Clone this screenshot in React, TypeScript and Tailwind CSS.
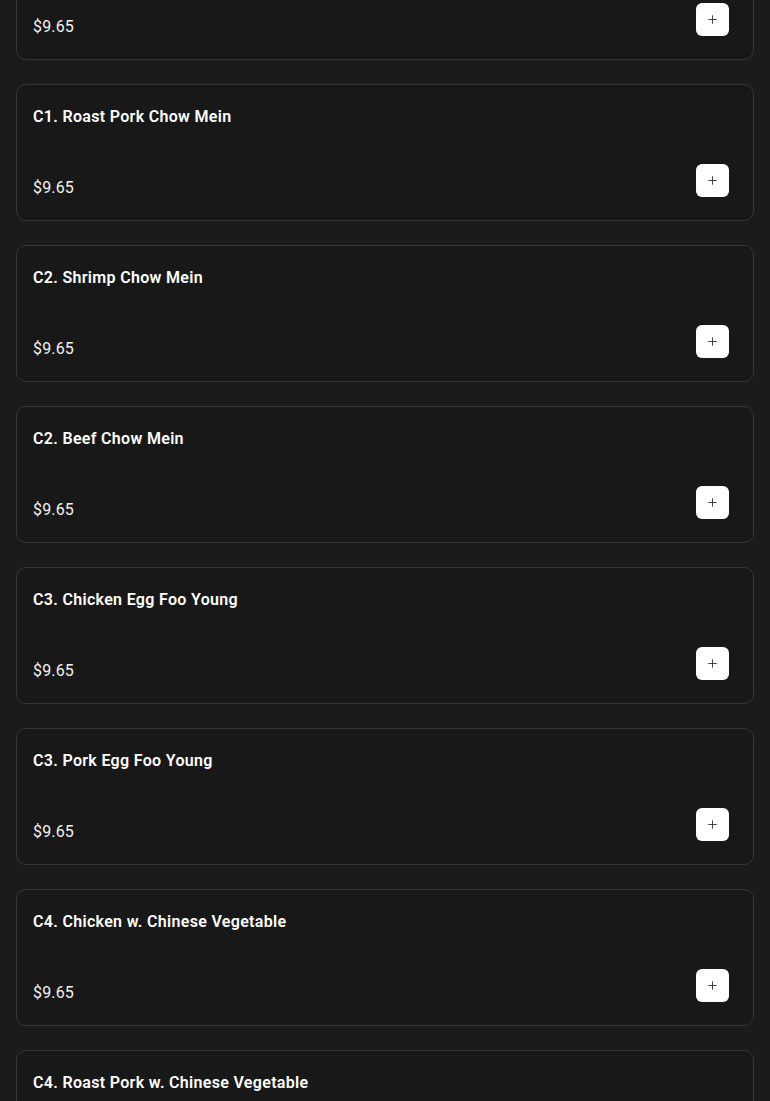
import { Plus } from "lucide-react";

const items = [
  "C1. Chicken Chow Mein",
  "C1. Roast Pork Chow Mein",
  "C2. Shrimp Chow Mein",
  "C2. Beef Chow Mein",
  "C3. Chicken Egg Foo Young",
  "C3. Pork Egg Foo Young",
  "C4. Chicken w. Chinese Vegetable",
  "C4. Roast Pork w. Chinese Vegetable",
];

function MenuItem({ name, price }: { name: string; price: string }) {
  return (
    <div className="flex h-[137px] flex-col rounded-[10px] border border-[#363636] bg-[#181818] pt-5 pr-6 pb-5 pl-4">
      <h3 className="text-base leading-6 font-semibold tracking-[0.02em] text-white">{name}</h3>
      <div className="mt-auto flex items-end justify-between">
        <span className="text-base leading-6 tracking-[0.01em] text-[#f2f2f2]">{price}</span>
        <button className="mb-[3px] flex h-[33px] w-[33px] items-center justify-center rounded-[6px] bg-white text-[#333]">
          <Plus size={13} strokeWidth={1.7} />
        </button>
      </div>
    </div>
  );
}

export default function App() {
  return (
    <div
      className="h-[1101px] overflow-hidden bg-[#1b1b1b] px-4"
      style={{ fontFamily: "Roboto, 'Liberation Sans', sans-serif" }}
    >
      <div className="-mt-[77px] flex flex-col gap-6">
        {items.map((name) => (
          <MenuItem key={name} name={name} price="$9.65" />
        ))}
      </div>
    </div>
  );
}
